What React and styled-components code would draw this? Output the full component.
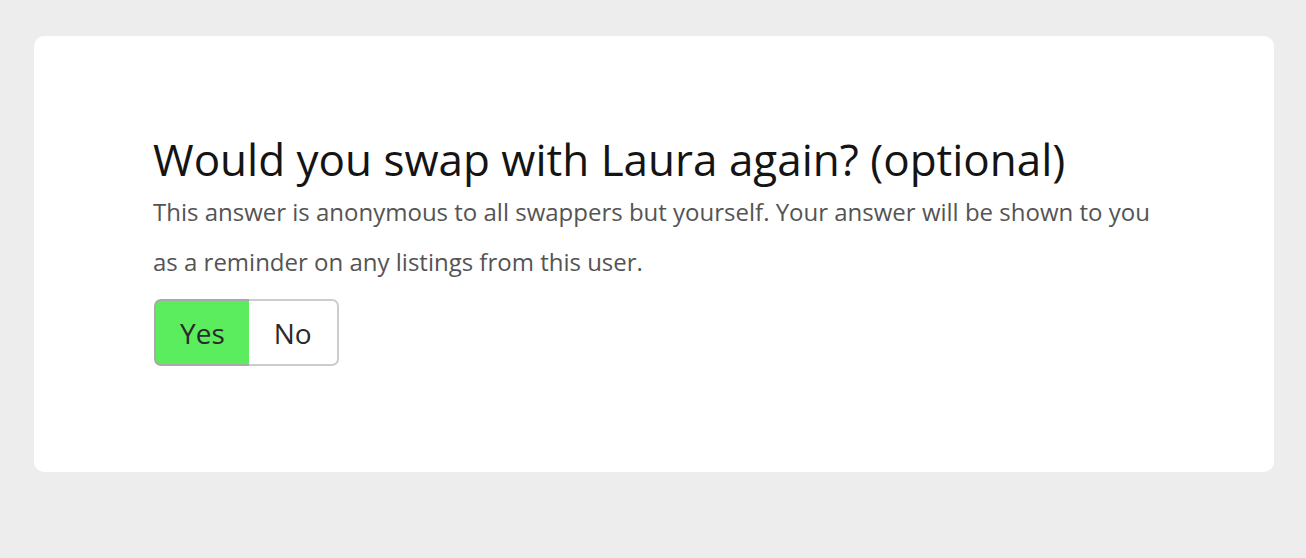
import React, { useState } from "react";
import styled, { createGlobalStyle } from "styled-components";

const GlobalStyle = createGlobalStyle`
  html, body {
    margin: 0;
    padding: 0;
    background: #ededed;
    font-family: "Open Sans", "Liberation Sans", sans-serif;
  }
`;

const Page = styled.div`
  padding: 36px 32px 86px 34px;
`;

const Card = styled.section`
  background: #ffffff;
  border-radius: 10px;
  height: 436px;
  box-sizing: border-box;
  padding: 95px 119px 0 120px;
`;

const Title = styled.h2`
  margin: 0 0 0 -1px;
  font-size: 44px;
  font-weight: 400;
  line-height: 56px;
  color: #141414;
`;

const Hint = styled.p`
  margin: 0 0 0 -1px;
  font-size: 24px;
  line-height: 50px;
  color: #545454;
  max-width: 1020px;
`;

const Toggle = styled.div`
  display: inline-flex;
  margin-top: 12px;
`;

const Option = styled.button`
  font-family: inherit;
  font-size: 28px;
  color: #2a2a2a;
  height: 67px;
  box-sizing: border-box;
  padding: 0 ${(p) => p.pad}px;
  border: 2px solid ${(p) => (p.active ? "#a9a9a9" : "#cccccc")};
  border-left-width: ${(p) => (p.first ? "2px" : "0")};
  border-right-width: ${(p) => (p.last ? "2px" : "0")};
  border-radius: ${(p) => (p.first ? "7px 0 0 7px" : "0 7px 7px 0")};
  background: ${(p) => (p.active ? "#5ced5f" : "#ffffff")};
  cursor: pointer;
`;

export default function App() {
  const [answer, setAnswer] = useState("yes");
  return (
    <>
      <GlobalStyle />
      <Page>
        <Card>
          <Title>Would you swap with Laura again? (optional)</Title>
          <Hint>
            This answer is anonymous to all swappers but yourself. Your answer
            will be shown to you as a reminder on any listings from this user.
          </Hint>
          <Toggle>
            <Option first pad={24} active={answer === "yes"} onClick={() => setAnswer("yes")}>
              Yes
            </Option>
            <Option last pad={25} active={answer === "no"} onClick={() => setAnswer("no")}>
              No
            </Option>
          </Toggle>
        </Card>
      </Page>
    </>
  );
}
